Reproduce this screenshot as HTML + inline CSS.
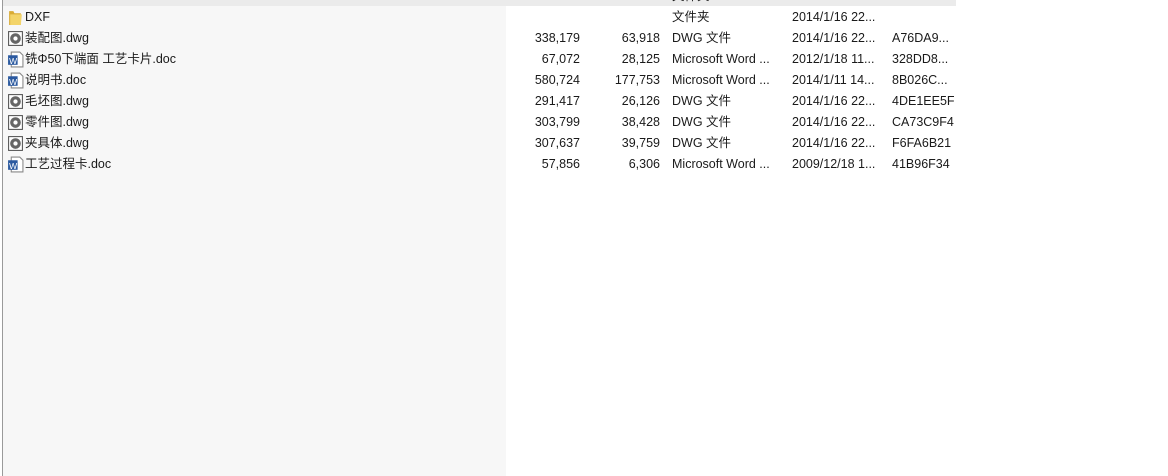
<!DOCTYPE html>
<html><head><meta charset="utf-8"><style>
body{margin:0;width:1168px;height:476px;background:#fff;position:relative;overflow:hidden;font-family:"Liberation Sans","Noto Sans CJK SC",sans-serif;font-size:12.5px;color:#1a1a1a}
.left{position:absolute;left:3px;top:0;width:503px;height:476px;background:#f7f7f7}
.vline{position:absolute;left:2px;top:0;width:1px;height:476px;background:#9a9a9a}
.top{position:absolute;left:3px;top:0;width:953px;height:6px;background:#ebebeb}
.row{position:absolute;left:0;height:21px;line-height:21px;white-space:nowrap;width:1000px}
.name{position:absolute;left:25px}
.ic{position:absolute;left:7px;top:2px;width:17px;height:17px}
.c{position:absolute}
.n1{left:500px;width:80px;text-align:right}
.n2{left:580px;width:80px;text-align:right}
</style></head><body>
<div class="left"></div><div class="vline"></div><div class="top"></div>
<div class="row" style="top:-14px"><span class="c" style="left:672px">文件夹</span></div>
<div class="row" style="top:7px">
 <svg class="ic" viewBox="0 0 16 16"><path d="M2 2h4l1 2h6v11H2z" fill="#d9ab35"/><path d="M3 5h11l-1 10H3z" fill="#f3d46a"/></svg>
 <span class="name">DXF</span>
 <span class="c" style="left:672px">文件夹</span><span class="c" style="left:792px">2014/1/16 22...</span>
</div>
<div class="row" style="top:28px">
 <svg class="ic" viewBox="0 0 16 16"><rect x="1" y="1" width="14" height="14" fill="#555"/><rect x="2" y="2" width="12" height="12" fill="#fff"/><circle cx="8" cy="8" r="5" fill="#666"/><circle cx="8" cy="8" r="2" fill="#fff"/></svg>
 <span class="name">装配图.dwg</span>
 <span class="c n1">338,179</span><span class="c n2">63,918</span>
 <span class="c" style="left:672px">DWG 文件</span><span class="c" style="left:792px">2014/1/16 22...</span><span class="c" style="left:892px">A76DA9...</span>
</div>
<div class="row" style="top:49px">
 <svg class="ic" viewBox="0 0 16 16"><path d="M4 1h8l3 3v11H4z" fill="#fff" stroke="#888"/><rect x="1" y="4" width="9" height="9" fill="#2c5aa0"/><text x="2" y="12" font-size="8" fill="#fff" font-family="Liberation Sans">W</text></svg>
 <span class="name">铣Φ50下端面 工艺卡片.doc</span>
 <span class="c n1">67,072</span><span class="c n2">28,125</span>
 <span class="c" style="left:672px">Microsoft Word ...</span><span class="c" style="left:792px">2012/1/18 11...</span><span class="c" style="left:892px">328DD8...</span>
</div>
<div class="row" style="top:70px">
 <svg class="ic" viewBox="0 0 16 16"><path d="M4 1h8l3 3v11H4z" fill="#fff" stroke="#888"/><rect x="1" y="4" width="9" height="9" fill="#2c5aa0"/><text x="2" y="12" font-size="8" fill="#fff" font-family="Liberation Sans">W</text></svg>
 <span class="name">说明书.doc</span>
 <span class="c n1">580,724</span><span class="c n2">177,753</span>
 <span class="c" style="left:672px">Microsoft Word ...</span><span class="c" style="left:792px">2014/1/11 14...</span><span class="c" style="left:892px">8B026C...</span>
</div>
<div class="row" style="top:91px">
 <svg class="ic" viewBox="0 0 16 16"><rect x="1" y="1" width="14" height="14" fill="#555"/><rect x="2" y="2" width="12" height="12" fill="#fff"/><circle cx="8" cy="8" r="5" fill="#666"/><circle cx="8" cy="8" r="2" fill="#fff"/></svg>
 <span class="name">毛坯图.dwg</span>
 <span class="c n1">291,417</span><span class="c n2">26,126</span>
 <span class="c" style="left:672px">DWG 文件</span><span class="c" style="left:792px">2014/1/16 22...</span><span class="c" style="left:892px">4DE1EE5F</span>
</div>
<div class="row" style="top:112px">
 <svg class="ic" viewBox="0 0 16 16"><rect x="1" y="1" width="14" height="14" fill="#555"/><rect x="2" y="2" width="12" height="12" fill="#fff"/><circle cx="8" cy="8" r="5" fill="#666"/><circle cx="8" cy="8" r="2" fill="#fff"/></svg>
 <span class="name">零件图.dwg</span>
 <span class="c n1">303,799</span><span class="c n2">38,428</span>
 <span class="c" style="left:672px">DWG 文件</span><span class="c" style="left:792px">2014/1/16 22...</span><span class="c" style="left:892px">CA73C9F4</span>
</div>
<div class="row" style="top:133px">
 <svg class="ic" viewBox="0 0 16 16"><rect x="1" y="1" width="14" height="14" fill="#555"/><rect x="2" y="2" width="12" height="12" fill="#fff"/><circle cx="8" cy="8" r="5" fill="#666"/><circle cx="8" cy="8" r="2" fill="#fff"/></svg>
 <span class="name">夹具体.dwg</span>
 <span class="c n1">307,637</span><span class="c n2">39,759</span>
 <span class="c" style="left:672px">DWG 文件</span><span class="c" style="left:792px">2014/1/16 22...</span><span class="c" style="left:892px">F6FA6B21</span>
</div>
<div class="row" style="top:154px">
 <svg class="ic" viewBox="0 0 16 16"><path d="M4 1h8l3 3v11H4z" fill="#fff" stroke="#888"/><rect x="1" y="4" width="9" height="9" fill="#2c5aa0"/><text x="2" y="12" font-size="8" fill="#fff" font-family="Liberation Sans">W</text></svg>
 <span class="name">工艺过程卡.doc</span>
 <span class="c n1">57,856</span><span class="c n2">6,306</span>
 <span class="c" style="left:672px">Microsoft Word ...</span><span class="c" style="left:792px">2009/12/18 1...</span><span class="c" style="left:892px">41B96F34</span>
</div>
</body></html>
